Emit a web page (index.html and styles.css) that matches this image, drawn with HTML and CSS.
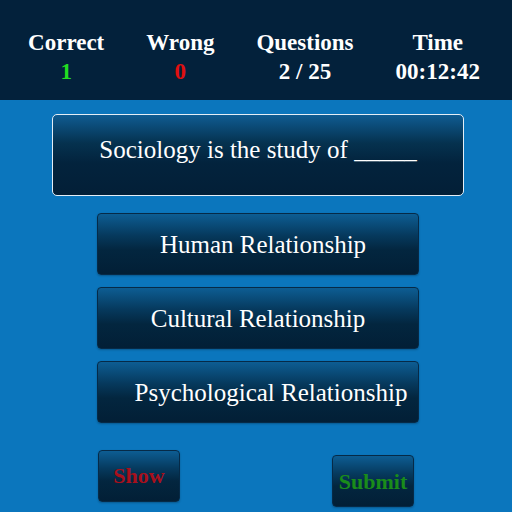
FILE: index.html
```html
<!DOCTYPE html>
<html lang="en">
<head>
  <meta charset="UTF-8">
  <title>Quiz</title>
  <link rel="stylesheet" href="styles.css">
</head>
<body>
  <div class="stats">
    <div class="stat">
      <div class="label">Correct</div>
      <div class="value good">1</div>
    </div>
    <div class="stat">
      <div class="label">Wrong</div>
      <div class="value bad">0</div>
    </div>
    <div class="stat">
      <div class="label">Questions</div>
      <div class="value">2 / 25</div>
    </div>
    <div class="stat">
      <div class="label">Time</div>
      <div class="value">00:12:42</div>
    </div>
  </div>
  <div class="main">
    <div class="question">Sociology is the study of _____</div>
    <div class="options">
      <div class="option human">Human Relationship</div>
      <div class="option">Cultural Relationship</div>
      <div class="option psych">Psychological Relationship</div>
    </div>
    <div class="actions">
      <div class="small-btn show">Show</div>
      <div class="small-btn submit">Submit</div>
    </div>
  </div>
</body>
</html>
```

FILE: styles.css
```css
body {
  margin: 0;
  width: 512px;
  height: 512px;
  overflow: hidden;
  background: #0b76bd;
  font-family: "Liberation Serif", "Times New Roman", serif;
  color: #fff;
}
.stats {
  height: 100px;
  background: #03213b;
  display: flex;
  justify-content: center;
  align-items: flex-start;
  gap: 42px;
  padding-top: 28px;
  padding-right: 4px;
  box-sizing: border-box;
}
.stat {
  text-align: center;
  font-weight: bold;
  font-size: 23px;
  line-height: 29px;
}
.value.good { color: #22dd22; }
.value.bad  { color: #e01010; }

.main {
  display: flex;
  flex-direction: column;
  align-items: center;
}
.question {
  margin-top: 14px;
  width: 412px;
  height: 82px;
  box-sizing: border-box;
  border: 1px solid #e4eef6;
  border-radius: 5px;
  background: linear-gradient(#0f5c92 0%, #05324f 35%, #03233d 60%, #031f37 100%);
  font-size: 25px;
  display: flex;
  align-items: center;
  justify-content: center;
  padding-bottom: 10px;
  margin-left: 4px;
}
.options {
  margin-top: 17px;
  margin-left: 4px;
  display: flex;
  flex-direction: column;
  gap: 12px;
}
.option,
.small-btn {
  box-sizing: border-box;
  border: 1px solid #062a47;
  border-radius: 4px;
  background: linear-gradient(#0d5d93 0%, #063a5e 35%, #03263f 60%, #021f36 100%);
  box-shadow: 0 1px 2px rgba(0,0,0,0.25);
}
.option {
  width: 322px;
  height: 62px;
  font-size: 25px;
  display: flex;
  align-items: center;
  justify-content: center;
  padding-top: 1px;
}
.option.human { padding-left: 10px; }
.option.psych { padding-left: 26px; }
.actions {
  width: 316px;
  display: flex;
  justify-content: space-between;
  align-items: flex-start;
  margin-top: 27px;
}
.small-btn {
  width: 82px;
  height: 52px;
  font-weight: bold;
  font-size: 22px;
  display: flex;
  align-items: center;
  justify-content: center;
}
.small-btn.show {
  color: #a8101c;
}
.small-btn.submit {
  color: #1a8c1a;
  margin-top: 5px;
  padding-top: 2px;
}
```
